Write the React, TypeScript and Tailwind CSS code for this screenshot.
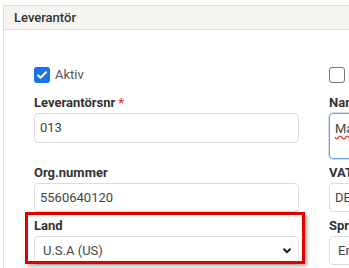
import React from "react";

const font = { fontFamily: '"Liberation Sans Narrow", Roboto, "Liberation Sans", sans-serif' };

function Label({ text, required }: { text: string; required?: boolean }) {
  return (
    <div className="h-[16px] leading-[16px] text-[13px] font-bold text-[#333] mb-[2px] whitespace-nowrap">
      {text}
      {required && <span className="text-[#e53935] ml-[3px]">*</span>}
    </div>
  );
}

function Input({ value, className = "" }: { value: string; className?: string }) {
  return (
    <div
      className={`h-[29px] border border-[#ddd] rounded-[4px] flex items-center pl-[5px] text-[13px] text-[#444] whitespace-nowrap overflow-hidden ${className}`}
    >
      {value}
    </div>
  );
}

export default function App() {
  return (
    <div className="min-h-screen bg-white pt-[5px] pl-[3px] overflow-hidden" style={font}>
      <div className="border-l border-t border-[#ddd] min-h-[263px]">
        {/* Header */}
        <div className="h-[24px] bg-[#f5f4f1] border-b border-[#ddd] flex items-center pl-[10px] text-[13px] font-medium text-[#333]">
          Leverantör
        </div>

        {/* Form */}
        <div className="pl-[30px] pt-[37px] grid grid-cols-[265px_265px] gap-x-[30px]">
          {/* Row 1 */}
          <div className="flex items-center gap-[5px] h-[16px]">
            <div className="w-[16px] h-[16px] rounded-[3px] bg-[#1a73e8] flex items-center justify-center">
              <svg className="w-[12px] h-[12px]" viewBox="0 0 24 24" fill="none" stroke="white" strokeWidth={4} strokeLinecap="round" strokeLinejoin="round">
                <path d="M4 12.5l5 5L20 6.5" />
              </svg>
            </div>
            <span className="text-[13px] text-[#555]">Aktiv</span>
          </div>
          <div className="flex items-center h-[16px]">
            <div className="w-[16px] h-[16px] rounded-[3px] border border-[#767676] bg-white" />
          </div>

          {/* Row 2 */}
          <div className="mt-[12px]">
            <Label text="Leverantörsnr" required />
            <Input value="013" className="h-[30px]" />
          </div>
          <div className="mt-[12px]">
            <Label text="Namn" />
            <div className="h-[46px] border border-[#6c9be0] rounded-[4px] pl-[5px] pt-[5px] text-[13px] text-[#444] shadow-[0_0_0_1px_rgba(120,160,230,0.35)]">
              <span className="underline decoration-wavy decoration-[#e53935] underline-offset-2">Marknadsföring</span>
            </div>
          </div>

          {/* Row 3 */}
          <div className="mt-[6px]">
            <Label text="Org.nummer" />
            <Input value="5560640120" />
          </div>
          <div className="mt-[6px]">
            <Label text="VAT-nummer" />
            <Input value="DE811234567" />
          </div>

          {/* Row 4 */}
          <div className="mt-[6px] relative">
            <Label text="Land" />
            <div className="h-[29px] border border-[#ddd] rounded-[4px] flex items-center justify-between pl-[8px] pr-[6px] text-[13px] text-[#444]">
              <span>U.S.A (US)</span>
              <svg className="w-[10px] h-[10px]" viewBox="0 0 24 24" fill="none" stroke="#222" strokeWidth={5} strokeLinecap="round" strokeLinejoin="round">
                <path d="M5 8l7 7 7-7" />
              </svg>
            </div>
            <div className="absolute left-[-9px] right-[-6px] top-[-6px] bottom-[1px] border-[3px] border-[#e00000] shadow-[2px_2px_4px_rgba(0,0,0,0.35)] pointer-events-none" />
          </div>
          <div className="mt-[6px]">
            <Label text="Språk" />
            <Input value="English" className="pl-[8px]" />
          </div>
        </div>
      </div>
    </div>
  );
}
